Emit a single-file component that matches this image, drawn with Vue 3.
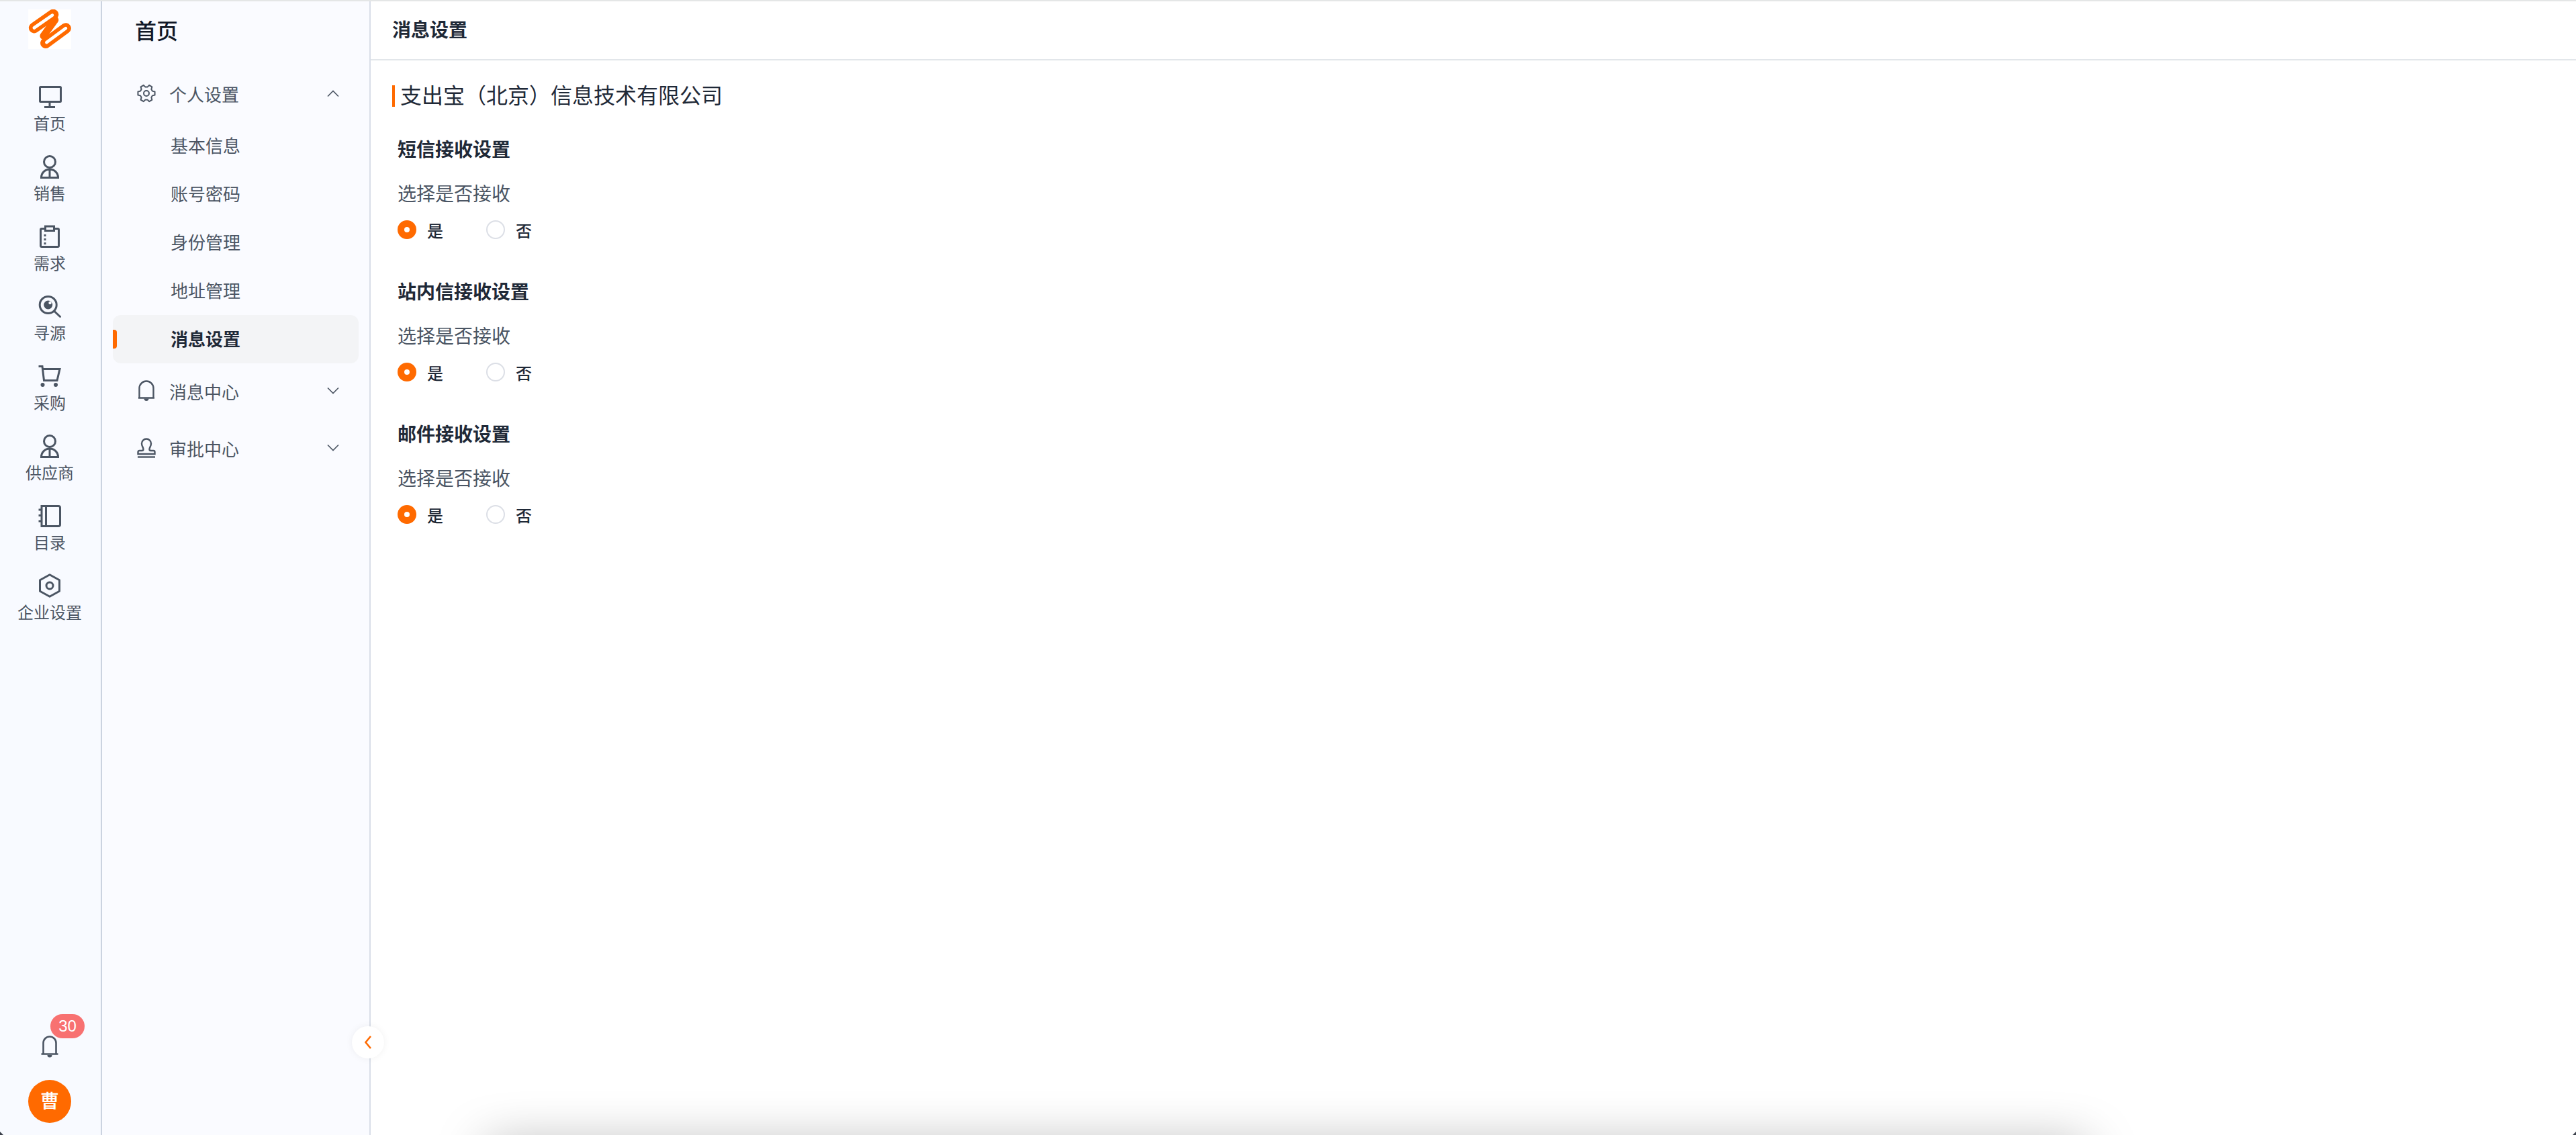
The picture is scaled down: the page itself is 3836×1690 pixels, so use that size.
<template>
  <div class="page">
    <!-- 一级导航 -->
    <aside class="rail">
      <svg class="logo" viewBox="36 27 192 178">
        <rect x="36" y="27" width="192" height="178" fill="#fff" />
        <g fill="none" stroke-linecap="round">
          <path d="M62 110L148 50" stroke="#ff6a00" stroke-width="48" />
          <path d="M114 178L204 112" stroke="#ff6a00" stroke-width="48" />
          <path d="M156 74L104 146" stroke="#ff6a00" stroke-width="32" />
          <path d="M62 110L144 53" stroke="#fff" stroke-width="14" />
          <path d="M118 175L204 112" stroke="#fff" stroke-width="14" />
        </g>
      </svg>

      <nav class="rail-list">
        <div v-for="item in railItems" :key="item.label" class="rail-item">
          <svg class="rail-icon" viewBox="0 0 36 36" fill="none" stroke="#4b5563" stroke-width="3">
            <template v-if="item.icon === 'monitor'">
              <rect x="3.5" y="3.5" width="31" height="22" rx="1" />
              <path d="M18 26v7M10 33.5h16" />
            </template>
            <template v-else-if="item.icon === 'person'">
              <circle cx="18" cy="11" r="8.5" />
              <path d="M5.500 34.500a12.500 12.500 0 0 1 25 0zM18 22v12" />
            </template>
            <template v-else-if="item.icon === 'clipboard'">
              <rect x="4.5" y="6.5" width="27" height="27" rx="1.5" />
              <rect x="11.5" y="3" width="13" height="6.5" fill="#f8faff" />
              <path d="M11 15v3M11 21v3M11 27v3" />
            </template>
            <template v-else-if="item.icon === 'search'">
              <circle cx="15.7" cy="16" r="12.5" />
              <circle cx="15.7" cy="16" r="6.5" fill="#4b5563" stroke="none" />
              <circle cx="18.5" cy="13" r="2.2" fill="#f8faff" stroke="none" />
              <path d="M25.5 26l8 7.5" stroke-linecap="round" />
            </template>
            <template v-else-if="item.icon === 'cart'">
              <path d="M1.5 3.5H7L9.5 24.5H29L33 7.5H8" />
              <circle cx="7.5" cy="31" r="3" fill="#4b5563" stroke="none" />
              <circle cx="27" cy="31" r="3" fill="#4b5563" stroke="none" />
            </template>
            <template v-else-if="item.icon === 'book'">
              <path d="M6 3.500h25a2.500 2.500 0 0 1 2.500 2.500v25a2.500 2.500 0 0 1-2.500 2.500H6zM12.500 3.500v30" />
              <path d="M1.500 9h5M1.500 17.500h5M1.500 26h5" />
            </template>
            <template v-else>
              <path d="M18 1.800L32.500 9.700V26.300L18 34.200 3.500 26.300V9.700z" stroke-linejoin="round" />
              <circle cx="18" cy="18" r="5" />
            </template>
          </svg>
          <span class="rail-label">{{ item.label }}</span>
        </div>
      </nav>

      <div class="rail-bottom">
        <div class="bell-wrap">
          <svg class="bell" viewBox="0 0 26 34" fill="none" stroke="#4b5563" stroke-width="2.6">
            <path d="M3.500 28V12a9.500 9.500 0 0 1 19 0v16M0.500 28.500h25" />
            <path d="M9.500 30h7a3.500 3.500 0 0 1-7 0z" fill="#4b5563" stroke="none" />
          </svg>
          <span class="badge">30</span>
        </div>
        <div class="avatar">曹</div>
      </div>
    </aside>

    <!-- 二级菜单 -->
    <aside class="side">
      <div class="side-title">首页</div>
      <div class="menu">
        <div class="menu-head">
          <svg class="menu-icon" viewBox="0 0 28 32" fill="none" stroke="#4b5563" stroke-width="2">
            <g transform="translate(0 2)">
              <path :d="gearPath" stroke-linejoin="round" />
              <circle cx="14" cy="14" r="4" />
            </g>
          </svg>
          <span>个人设置</span>
          <svg class="arrow" viewBox="0 0 18 10" fill="none" stroke="#4b5563" stroke-width="1.6">
            <path d="M1 9.500l8-8 8 8" />
          </svg>
        </div>
        <div class="sub-list">
          <div
            v-for="sub in subItems"
            :key="sub"
            class="sub-item"
            :class="{ active: sub === '消息设置' }"
          >{{ sub }}</div>
        </div>

        <div class="menu-head">
          <svg class="menu-icon" viewBox="0 0 28 32" fill="none" stroke="#4b5563" stroke-width="2.4">
            <path d="M3.500 26V12a10.500 10.500 0 0 1 21 0v14M2 26.500h24" />
            <path d="M10.500 27.500h7a3.500 3.500 0 0 1-7 0z" fill="#4b5563" stroke="none" />
          </svg>
          <span>消息中心</span>
          <svg class="arrow" viewBox="0 0 18 10" fill="none" stroke="#4b5563" stroke-width="1.6">
            <path d="M1 .5l8 8 8-8" />
          </svg>
        </div>
        <div class="menu-head">
          <svg class="menu-icon" viewBox="0 0 28 32" fill="none" stroke="#4b5563" stroke-width="2.4">
            <path d="M9.500 18c0-3-2.500-4.500-2.500-8.500a7 7 0 0 1 14 0C21 13.500 18.500 15 18.500 18c0 1 .5 2 2 2h4a2 2 0 0 1 2 2v3h-25v-3a2 2 0 0 1 2-2h4c1.500 0 2-1 2-2z" />
            <path d="M1 29.500h26" />
          </svg>
          <span>审批中心</span>
          <svg class="arrow" viewBox="0 0 18 10" fill="none" stroke="#4b5563" stroke-width="1.6">
            <path d="M1 .5l8 8 8-8" />
          </svg>
        </div>
      </div>

      <div class="collapse">
        <svg viewBox="0 0 10 20" fill="none" stroke="#ff6a00" stroke-width="2.6">
          <path d="M9 1L1.500 10 9 19" />
        </svg>
      </div>
    </aside>

    <!-- 内容区 -->
    <main class="main">
      <header class="main-head">消息设置</header>
      <div class="main-body">
        <h2 class="company">支出宝（北京）信息技术有限公司</h2>
        <section v-for="group in groups" :key="group" class="group">
          <h3>{{ group }}</h3>
          <p>选择是否接收</p>
          <div class="radios">
            <label class="radio">
              <i class="dot on"></i>
              <span>是</span>
            </label>
            <label class="radio">
              <i class="dot"></i>
              <span>否</span>
            </label>
          </div>
        </section>
      </div>
    </main>

    <!-- 底部阴影和窗口圆角 -->
    <div class="bottom-shadow"></div>
    <i class="corner left"></i>
    <i class="corner right"></i>
  </div>
</template>

<script setup>
const railItems = [
  { label: '首页', icon: 'monitor' },
  { label: '销售', icon: 'person' },
  { label: '需求', icon: 'clipboard' },
  { label: '寻源', icon: 'search' },
  { label: '采购', icon: 'cart' },
  { label: '供应商', icon: 'person' },
  { label: '目录', icon: 'book' },
  { label: '企业设置', icon: 'hexagon' },
]

const subItems = ['基本信息', '账号密码', '身份管理', '地址管理', '消息设置']

const groups = ['短信接收设置', '站内信接收设置', '邮件接收设置']

// 六齿齿轮
const gearPath = (() => {
  const pts = []
  for (let i = 0; i < 6; i++) {
    const a = i * 60
    for (const [r, d] of [[9.5, -21], [12.8, -11], [12.8, 11], [9.5, 21]]) {
      const t = ((a + d) * Math.PI) / 180
      pts.push((14 + r * Math.cos(t)).toFixed(2) + ' ' + (14 + r * Math.sin(t)).toFixed(2))
    }
  }
  return 'M' + pts.join('L') + 'z'
})()
</script>

<style>
html, body { margin: 0; background: #fff; }
</style>

<style scoped>
.page {
  position: relative;
  display: flex;
  width: 3836px;
  height: 1690px;
  box-sizing: border-box;
  border-top: 2px solid #e4e6e6;
  overflow: hidden;
  background: #fff;
  color: #1f2937;
  font-family: Inter, "Noto Sans CJK SC", sans-serif;
}

/* 一级导航 */
.rail {
  display: flex;
  flex-direction: column;
  align-items: center;
  flex: none;
  width: 152px;
  box-sizing: border-box;
  padding: 12px 2px 18px 0;
  border-right: 2px solid #cbd3e0;
  background: #f8faff;
}
.logo { display: block; flex: none; width: 64px; height: 59px; }
.rail-list { margin-top: 53px; }
.rail-item {
  display: flex;
  flex-direction: column;
  align-items: center;
  width: 148px;
  height: 104px;
}
.rail-icon { display: block; width: 36px; height: 36px; margin-bottom: 6px; }
.rail-label { font-size: 24px; line-height: 34px; color: #4b5563; }
.rail-bottom {
  display: flex;
  flex-direction: column;
  align-items: center;
  margin-top: auto;
}
.bell-wrap { position: relative; width: 26px; height: 34px; margin-bottom: 33px; }
.bell { display: block; width: 26px; height: 34px; }
.badge {
  position: absolute;
  left: 14px;
  top: -31px;
  width: 51px;
  height: 36px;
  border-radius: 18px;
  background: #f87171;
  color: #fff;
  font-family: "Liberation Sans", sans-serif;
  font-size: 24px;
  line-height: 36px;
  text-align: center;
}
.avatar {
  width: 64px;
  height: 64px;
  border-radius: 50%;
  background: #ff6a00;
  color: #fff;
  font-size: 28px;
  font-weight: 500;
  line-height: 64px;
  text-align: center;
}

/* 二级菜单 */
.side {
  position: relative;
  flex: none;
  width: 400px;
  box-sizing: border-box;
  border-right: 2px solid #d9dee8;
  background: #fafbff;
}
.side-title {
  height: 88px;
  padding-left: 49px;
  color: #111827;
  font-size: 32px;
  font-weight: 500;
  line-height: 90px;
}
.menu { padding: 13px 16px 0; }
.menu-head {
  display: flex;
  align-items: center;
  height: 72px;
  margin-bottom: 13px;
  padding: 0 29px 0 36px;
  color: #4b5563;
  font-size: 26px;
}
.menu-icon { flex: none; width: 28px; height: 32px; margin-right: 20px; }
.arrow { flex: none; width: 18px; height: 10px; margin-left: auto; }
.sub-list { margin: -7px 0 5px; }
.sub-item {
  position: relative;
  height: 72px;
  padding-left: 86px;
  border-radius: 12px;
  color: #4b5563;
  font-size: 26px;
  line-height: 74px;
}
.sub-item.active { background: #f3f4f6; color: #1f2937; font-weight: 700; }
.sub-item.active::before {
  content: "";
  position: absolute;
  left: 0;
  top: 22px;
  width: 6px;
  height: 28px;
  border-radius: 0 4px 4px 0;
  background: #ff6a00;
}
.collapse {
  position: absolute;
  left: 372px;
  top: 1526px;
  display: flex;
  align-items: center;
  justify-content: center;
  width: 48px;
  height: 48px;
  border-radius: 50%;
  background: #fff;
  box-shadow: 0 0 12px rgba(0, 0, 0, 0.06);
}
.collapse svg { width: 10px; height: 20px; }

/* 内容区 */
.main { flex: 1; min-width: 0; }
.main-head {
  height: 86px;
  padding-left: 32px;
  border-bottom: 2px solid #e2e6ea;
  color: #1f2937;
  font-size: 28px;
  font-weight: 700;
  line-height: 86px;
}
.main-body { padding: 37px 32px 0; }
.company {
  height: 32px;
  margin: 0 0 44px;
  padding-left: 8px;
  border-left: 4px solid #ff6a00;
  font-size: 32px;
  font-weight: 400;
  line-height: 32px;
}
.group { margin: 0 0 59px 8px; }
.group h3 {
  margin: 0;
  font-size: 28px;
  font-weight: 700;
  line-height: 40px;
}
.group p {
  margin: 26px 0 0;
  color: #4b5563;
  font-size: 28px;
  line-height: 40px;
}
.radios { display: flex; gap: 64px; margin-top: 19px; }
.radio {
  display: flex;
  align-items: center;
  gap: 16px;
  height: 28px;
  color: #1f2937;
  font-size: 24px;
  font-weight: 500;
}
.dot {
  display: block;
  width: 28px;
  height: 28px;
  box-sizing: border-box;
  border: 2px solid #dcdfe6;
  border-radius: 50%;
  background: #fff;
}
.dot.on { border: 10px solid #ff6a00; }

/* 底部 */
.bottom-shadow {
  position: absolute;
  left: 725px;
  top: 1706px;
  width: 2382px;
  height: 40px;
  box-shadow: 0 0 76px rgba(0, 0, 0, 0.4);
}
.corner {
  position: absolute;
  bottom: 0;
  width: 5px;
  height: 5px;
  background: #3a3f4a;
}
.corner.left { left: 0; clip-path: polygon(0 0, 100% 100%, 0 100%); }
.corner.right { right: 0; clip-path: polygon(100% 0, 100% 100%, 0 100%); }
</style>
